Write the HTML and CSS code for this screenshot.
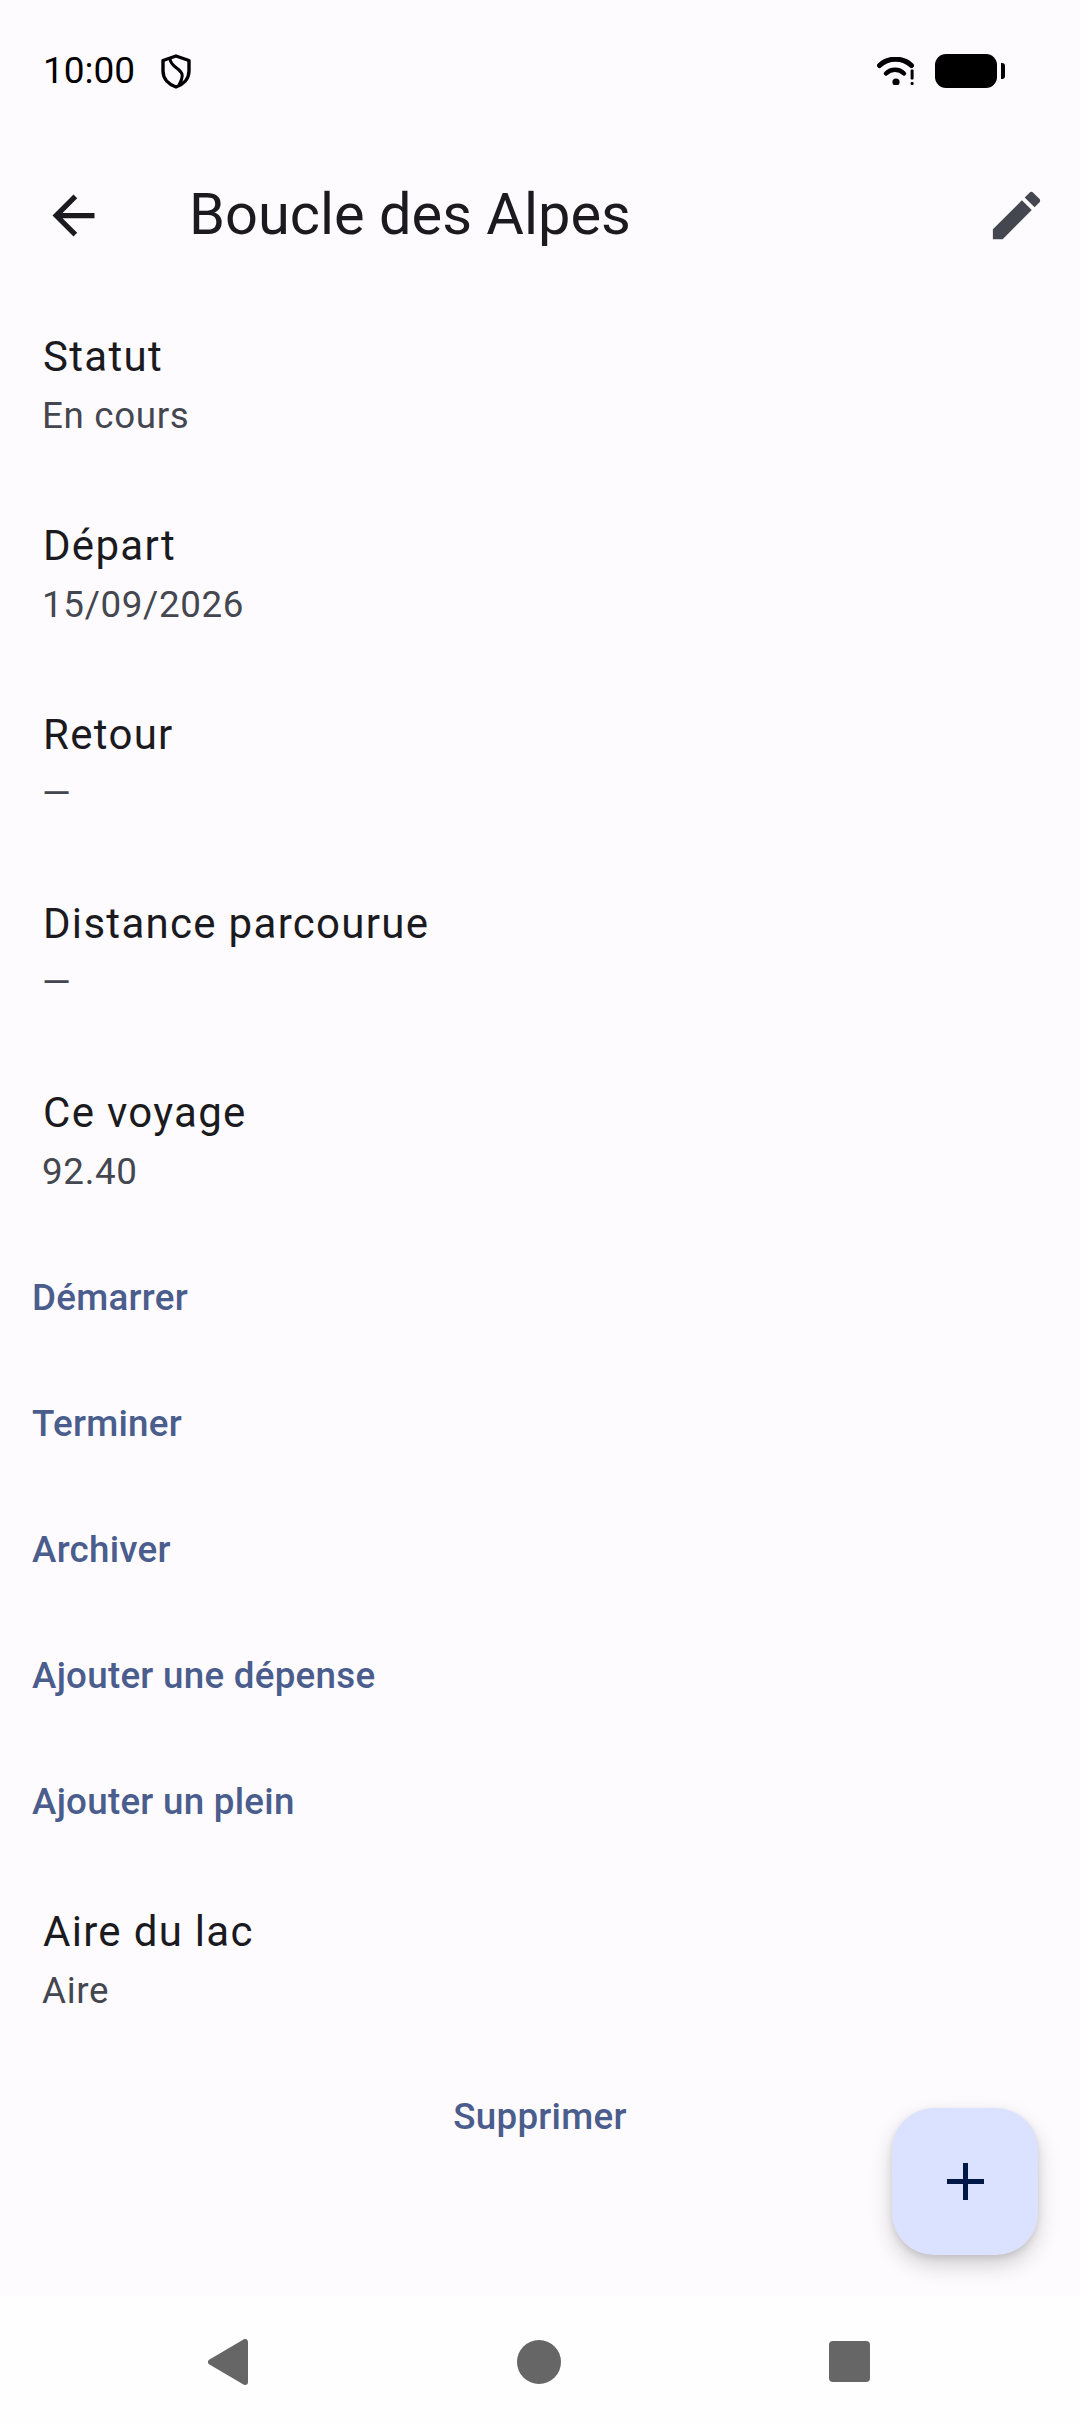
FILE: index.html
```html
<!DOCTYPE html>
<html>

<head>
	<meta charset="UTF-8">
	<title>Boucle des Alpes</title>
	<link rel="stylesheet" href="styles.css">
</head>

<body>
	<div class="screen">
		<!-- barre d'état -->
		<div class="status-bar">
			<div class="status-left">
				<span class="clock">10:00</span>
				<svg class="shield" viewBox="0 0 30 35">
					<path d="M15 2 L28 6.5 V17 C28 25 22 30.5 15 33 C8 30.5 2 25 2 17 V6.5 Z" fill="none" stroke="#000" stroke-width="3.4" stroke-linejoin="round"/>
					<path d="M9 5 C10 13 19 14 21 20 C22 24 20 27 18 31" fill="none" stroke="#000" stroke-width="3"/>
				</svg>
			</div>
			<div class="status-right">
				<svg class="wifi" viewBox="0 0 38 28">
					<path d="M2.5 8.5 C11 0 26 0 34.5 8.5" fill="none" stroke="#000" stroke-width="5" stroke-linecap="round"/>
					<path d="M9 16.5 C14 11.5 22 11.5 27 16.5" fill="none" stroke="#000" stroke-width="4.5" stroke-linecap="round"/>
					<circle cx="19" cy="25" r="3.6" fill="#000"/>
					<rect x="33.6" y="12.5" width="3" height="10" rx="1" fill="#000"/>
					<rect x="33.6" y="25" width="3" height="3" rx="1" fill="#000"/>
				</svg>
				<div class="battery"></div>
				<div class="battery-tip"></div>
			</div>
		</div>

		<!-- barre de titre -->
		<header class="app-bar">
			<svg class="back-icon" viewBox="0 0 24 24">
				<path d="M20 11H7.83l5.59-5.59L12 4l-8 8 8 8 1.41-1.41L7.83 13H20v-2z"/>
			</svg>
			<h1 class="app-title">Boucle des Alpes</h1>
			<svg class="edit-icon" viewBox="0 0 24 24">
				<path d="M3 17.25V21h3.75L17.81 9.94l-3.75-3.75L3 17.25zM20.71 7.04c.39-.39.39-1.02 0-1.41l-2.34-2.34c-.39-.39-1.02-.39-1.41 0l-1.83 1.83 3.75 3.75 1.83-1.83z"/>
			</svg>
		</header>

		<main class="content">
			<div class="tile">
				<div class="tile-title">Statut</div>
				<div class="tile-sub">En cours</div>
			</div>
			<div class="tile">
				<div class="tile-title">Départ</div>
				<div class="tile-sub">15/09/2026</div>
			</div>
			<div class="tile">
				<div class="tile-title">Retour</div>
				<div class="tile-sub">—</div>
			</div>
			<div class="tile">
				<div class="tile-title">Distance parcourue</div>
				<div class="tile-sub">—</div>
			</div>
			<div class="tile">
				<div class="tile-title">Ce voyage</div>
				<div class="tile-sub">92.40</div>
			</div>

			<div class="text-btn">Démarrer</div>
			<div class="text-btn">Terminer</div>
			<div class="text-btn">Archiver</div>
			<div class="text-btn">Ajouter une dépense</div>
			<div class="text-btn">Ajouter un plein</div>

			<div class="tile">
				<div class="tile-title">Aire du lac</div>
				<div class="tile-sub">Aire</div>
			</div>

			<div class="text-btn text-btn-center">Supprimer</div>
		</main>

		<!-- bouton flottant -->
		<div class="fab">
			<svg class="fab-icon" viewBox="0 0 37 37">
				<path d="M16 0h5v16h16v5H21v16h-5V21H0v-5h16z"/>
			</svg>
		</div>

		<!-- navigation système -->
		<nav class="nav-bar">
			<svg class="nav-back" viewBox="0 0 40 46">
				<path d="M37 3 V43 L3 23 Z" fill="#666" stroke="#666" stroke-width="6" stroke-linejoin="round"/>
			</svg>
			<div class="nav-home"></div>
			<div class="nav-recent"></div>
		</nav>
	</div>
</body>

</html>
```

FILE: styles.css
```css
* {
	box-sizing: border-box;
}

html,
body {
	margin: 0;
	padding: 0;
}

body {
	font-family: Roboto, "Noto Sans", sans-serif;
	color: #1b1b1f;
}

.screen {
	position: relative;
	width: 1080px;
	height: 2424px;
	display: flex;
	flex-direction: column;
	background: #fefbff;
	overflow: hidden;
}

/* barre d'état */
.status-bar {
	height: 131px;
	flex: none;
	display: flex;
	align-items: flex-start;
	justify-content: space-between;
	padding: 52px 75px 0 43px;
}

.status-left,
.status-right {
	display: flex;
	align-items: center;
	height: 38px;
}

.clock {
	font-size: 37px;
	line-height: 38px;
	color: #000;
}

.shield {
	width: 30px;
	height: 35px;
	margin-left: 26px;
}

.wifi {
	width: 38px;
	height: 28px;
	margin-right: 20px;
}

.battery {
	width: 62px;
	height: 34px;
	border-radius: 11px;
	background: #000;
}

.battery-tip {
	width: 4px;
	height: 16px;
	margin-left: 4px;
	border-radius: 0 3px 3px 0;
	background: #000;
}

/* barre de titre */
.app-bar {
	height: 168px;
	flex: none;
	display: flex;
	align-items: center;
	padding: 0 32px 0 42px;
}

.back-icon {
	width: 63px;
	height: 63px;
	fill: #1b1b1f;
}

.app-title {
	flex: 1;
	margin: 0 0 2px 84px;
	font-size: 57.75px;
	font-weight: 400;
	line-height: 74px;
}

.edit-icon {
	width: 63px;
	height: 63px;
	fill: #44474f;
}

/* contenu */
.content {
	flex: 1;
	margin-top: -10px;
}

.tile {
	height: 189px;
	display: flex;
	flex-direction: column;
	justify-content: center;
	padding: 0 42px;
}

.tile-title {
	margin: 0 0 2.5px 1px;
	font-size: 42px;
	line-height: 63px;
	letter-spacing: 1.3px;
}

.tile-sub {
	font-size: 36.75px;
	line-height: 52px;
	letter-spacing: 0.66px;
	color: #44474f;
}

.text-btn {
	height: 126px;
	display: flex;
	align-items: center;
	padding: 0 32px;
	font-size: 36.75px;
	font-weight: 500;
	letter-spacing: 0.26px;
	color: #4a5d8c;
}

.text-btn-center {
	justify-content: center;
}

/* bouton flottant */
.fab {
	position: absolute;
	left: 892px;
	top: 2108px;
	width: 146px;
	height: 147px;
	display: flex;
	align-items: center;
	justify-content: center;
	border-radius: 42px;
	background: #dae2ff;
	box-shadow: 0 10px 22px rgba(0, 0, 0, 0.18), 0 3px 6px rgba(0, 0, 0, 0.1);
}

.fab-icon {
	width: 37px;
	height: 37px;
	fill: #001848;
}

/* navigation système */
.nav-bar {
	height: 128px;
	flex: none;
	display: flex;
	align-items: center;
	background: #fefefe;
	padding: 3px 0 0 208px;
}

.nav-back {
	width: 40px;
	height: 46px;
}

.nav-home {
	width: 44px;
	height: 44px;
	margin-left: 269px;
	border-radius: 50%;
	background: #666;
}

.nav-recent {
	width: 41px;
	height: 41px;
	margin-left: 268px;
	border-radius: 4px;
	background: #666;
}
```
